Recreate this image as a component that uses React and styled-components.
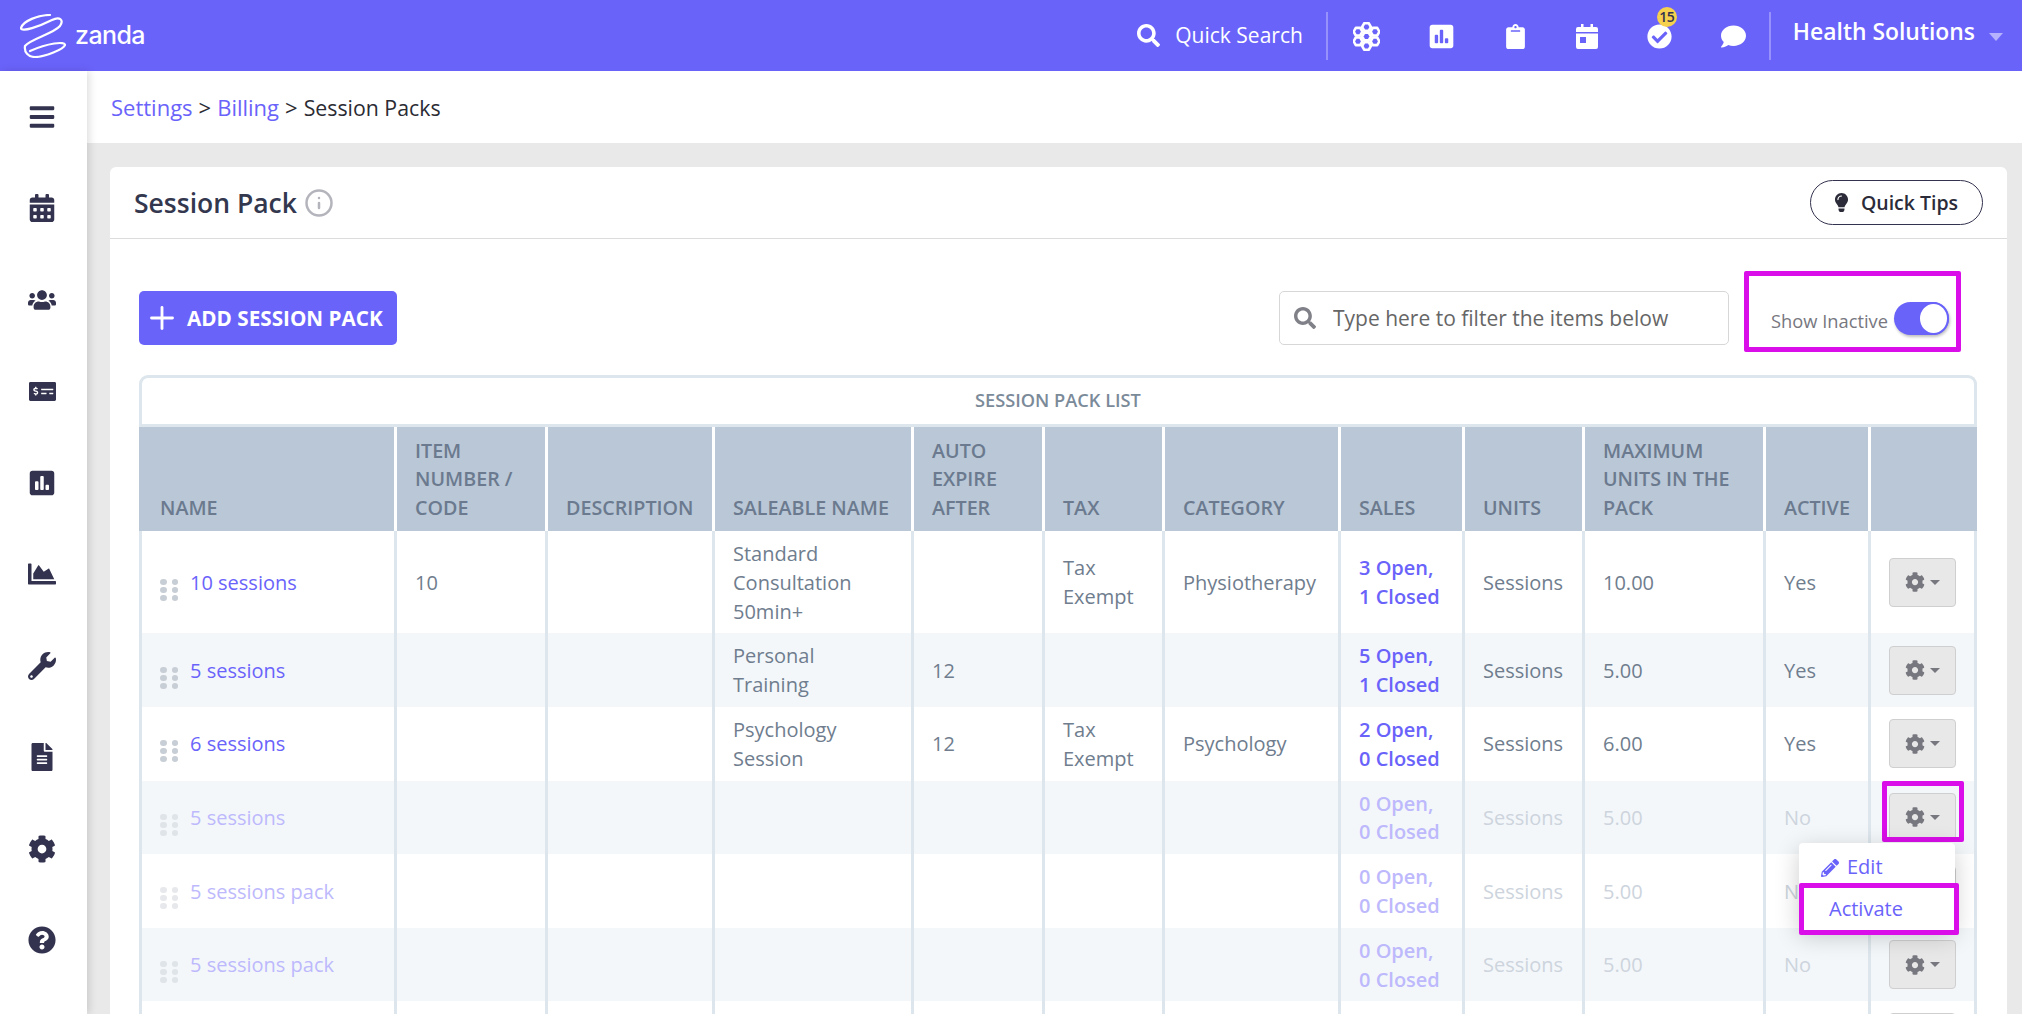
import React from "react";
import styled, { createGlobalStyle } from "styled-components";
import {
  FaBars,
  FaCalendarAlt,
  FaChartArea,
  FaCheckCircle,
  FaClipboard,
  FaCog,
  FaComment,
  FaFileAlt,
  FaLightbulb,
  FaMoneyCheckAlt,
  FaPencilAlt,
  FaPoll,
  FaQuestionCircle,
  FaSearch,
  FaUsers,
  FaWrench
} from "react-icons/fa";
import { Info, Plus } from "lucide-react";

const PURPLE = "#6a63fa";
const MAGENTA = "#d90ee8";
const LINE = "#dce6ec";

const GlobalStyle = createGlobalStyle`
  html, body {
    margin: 0;
    height: 100%;
    overflow: hidden;
    background: #e9e9e9;
    font-family: "Open Sans", "Noto Sans", sans-serif;
  }
  * { box-sizing: border-box; }
`;

const sideIcons = [
  { Icon: FaBars, size: 28 },
  { Icon: FaCalendarAlt, size: 28 },
  { Icon: FaUsers, size: 28 },
  { Icon: FaMoneyCheckAlt, size: 27 },
  { Icon: FaPoll, size: 28 },
  { Icon: FaChartArea, size: 28 },
  { Icon: FaWrench, size: 28 },
  { Icon: FaFileAlt, size: 28 },
  { Icon: FaCog, size: 28 },
  { Icon: FaQuestionCircle, size: 28 }
];

const columns = [255, 151, 167, 199, 131, 120, 176, 124, 120, 181, 105, 103];

const headings = [
  "NAME",
  "ITEM NUMBER / CODE",
  "DESCRIPTION",
  "SALEABLE NAME",
  "AUTO EXPIRE AFTER",
  "TAX",
  "CATEGORY",
  "SALES",
  "UNITS",
  "MAXIMUM UNITS IN THE PACK",
  "ACTIVE",
  ""
];

const rows = [
  {
    name: "10 sessions",
    code: "10",
    saleable: "Standard Consultation 50min+",
    tax: "Tax Exempt",
    category: "Physiotherapy",
    sales: ["3 Open,", "1 Closed"],
    units: "Sessions",
    max: "10.00",
    active: "Yes"
  },
  {
    name: "5 sessions",
    saleable: "Personal Training",
    expire: "12",
    sales: ["5 Open,", "1 Closed"],
    units: "Sessions",
    max: "5.00",
    active: "Yes"
  },
  {
    name: "6 sessions",
    saleable: "Psychology Session",
    expire: "12",
    tax: "Tax Exempt",
    category: "Psychology",
    sales: ["2 Open,", "0 Closed"],
    units: "Sessions",
    max: "6.00",
    active: "Yes"
  },
  {
    name: "5 sessions",
    sales: ["0 Open,", "0 Closed"],
    units: "Sessions",
    max: "5.00",
    active: "No",
    inactive: true,
    menu: true
  },
  {
    name: "5 sessions pack",
    sales: ["0 Open,", "0 Closed"],
    units: "Sessions",
    max: "5.00",
    active: "No",
    inactive: true
  },
  {
    name: "5 sessions pack",
    sales: ["0 Open,", "0 Closed"],
    units: "Sessions",
    max: "5.00",
    active: "No",
    inactive: true
  },
  // only the top of this row's button shows above the fold
  { blank: true }
];

const ZandaMark = () => (
  <svg width="46" height="44" viewBox="20 13 46 44" fill="none">
    <path
      d="M50 14C38 14 23 20 21 27C21 32 40 25 52 19C60 15 64 19 60 25C53 33 30 38 25 45C24 51 28 56 35 56C45 56 64 48 65 44C65 40 48 42 30 50"
      stroke="#fff"
      strokeWidth="2.2"
      strokeLinecap="round"
    />
  </svg>
);

const hexPoints = (cx, cy, r) =>
  [0, 1, 2, 3, 4, 5]
    .map(i => {
      const a = (Math.PI / 3) * i;
      return `${cx + r * Math.cos(a)},${cy + r * Math.sin(a)}`;
    })
    .join(" ");

const HiveIcon = () => (
  <svg width="27" height="29" viewBox="0 0 27 29" fill="none">
    {[
      [13.5, 14.5],
      [13.5, 5],
      [13.5, 24],
      [5, 9.7],
      [22, 9.7],
      [5, 19.3],
      [22, 19.3]
    ].map(([x, y]) => (
      <polygon
        key={`${x}-${y}`}
        points={hexPoints(x, y, 4.4)}
        stroke="#fff"
        strokeWidth="2.6"
        strokeLinejoin="round"
      />
    ))}
  </svg>
);

const CalendarIcon = () => (
  <svg width="22" height="25" viewBox="0 0 22 25">
    <path
      d="M5 0h2.5v3h7V0H17v3h3a2 2 0 0 1 2 2v3H0V5a2 2 0 0 1 2-2h3zM0 9.5h22V23a2 2 0 0 1-2 2H2a2 2 0 0 1-2-2zm4 3.5v6h6v-6z"
      fill="#fff"
    />
  </svg>
);

const DragDots = ({ $inactive }) => (
  <DragHandle $inactive={$inactive}>
    {[0, 1, 2, 3, 4, 5].map(i => (
      <i key={i} />
    ))}
  </DragHandle>
);

const ActionCell = ({ menu }) => (
  <ActionWrap>
    {menu && <ButtonMark />}
    <GearButton>
      <FaCog size={20} />
      <GearCaret />
    </GearButton>
    {menu && (
      <Dropdown>
        <MenuItem>
          <FaPencilAlt size={18} />
          Edit
        </MenuItem>
        <ActivateItem>Activate</ActivateItem>
      </Dropdown>
    )}
  </ActionWrap>
);

export default function App() {
  return (
    <Page>
      <GlobalStyle />
      <TopBar>
        <Logo>
          <ZandaMark />
          <LogoText>zanda</LogoText>
        </Logo>
        <QuickSearch>
          <FaSearch size={23} />
          Quick Search
        </QuickSearch>
        <NavDivider />
        <NavSlot $w={78}>
          <HiveIcon />
        </NavSlot>
        <NavSlot $w={71}>
          <FaPoll size={27} />
        </NavSlot>
        <NavSlot $w={77}>
          <FaClipboard size={25} />
        </NavSlot>
        <NavSlot $w={67}>
          <CalendarIcon />
        </NavSlot>
        <NavSlot $w={78}>
          <FaCheckCircle size={25} />
          <Badge>15</Badge>
        </NavSlot>
        <NavSlot $w={70}>
          <FaComment size={25} />
        </NavSlot>
        <NavDivider />
        <Account>Health Solutions</Account>
        <AccountCaret />
      </TopBar>
      <Body>
        <Sidebar>
          {sideIcons.map(({ Icon, size }, i) => (
            <SideSlot key={i}>
              <Icon size={size} />
            </SideSlot>
          ))}
        </Sidebar>
        <Main>
          <Breadcrumb>
            <Crumb>Settings</Crumb> &gt; <Crumb>Billing</Crumb> &gt;{" "}
            <CurrentCrumb>Session Packs</CurrentCrumb>
          </Breadcrumb>
          <Card>
            <CardHeader>
              <CardTitle>Session Pack</CardTitle>
              <InfoIcon size={30} strokeWidth={2} />
              <QuickTips>
                <FaLightbulb size={19} />
                Quick Tips
              </QuickTips>
            </CardHeader>
            <CardBody>
              <Toolbar>
                <AddButton>
                  <Plus size={36} strokeWidth={1.9} />
                  ADD SESSION PACK
                </AddButton>
                <FilterBox>
                  <FaSearch size={22} />
                  <FilterInput placeholder="Type here to filter the items below" />
                </FilterBox>
                <ToggleMark>
                  <ToggleLabel>Show Inactive</ToggleLabel>
                  <Toggle>
                    <Knob />
                  </Toggle>
                </ToggleMark>
              </Toolbar>
              <TablePanel>
                <TableTitle>SESSION PACK LIST</TableTitle>
                <Table>
                  <colgroup>
                    {columns.map((w, i) => (
                      <col key={i} style={{ width: w }} />
                    ))}
                  </colgroup>
                  <thead>
                    <tr>
                      {headings.map((h, i) => (
                        <Th key={i}>{h}</Th>
                      ))}
                    </tr>
                  </thead>
                  <tbody>
                    {rows.map((r, i) => (
                      <Row key={i} $striped={i % 2 === 1}>
                        <Td>
                          {r.name && (
                            <NameWrap>
                              <DragDots $inactive={r.inactive} />
                              <RowLink $inactive={r.inactive}>{r.name}</RowLink>
                            </NameWrap>
                          )}
                        </Td>
                        <Td $inactive={r.inactive}>{r.code}</Td>
                        <Td />
                        <Td $inactive={r.inactive}>{r.saleable}</Td>
                        <Td $inactive={r.inactive}>{r.expire}</Td>
                        <Td $inactive={r.inactive}>{r.tax}</Td>
                        <Td $inactive={r.inactive}>{r.category}</Td>
                        <Td>
                          {r.sales && (
                            <RowLink $inactive={r.inactive} $bold>
                              {r.sales[0]}
                              <br />
                              {r.sales[1]}
                            </RowLink>
                          )}
                        </Td>
                        <Td $inactive={r.inactive}>{r.units}</Td>
                        <Td $inactive={r.inactive}>{r.max}</Td>
                        <Td $inactive={r.inactive}>{r.active}</Td>
                        <ActionTd>
                          <ActionCell menu={r.menu} />
                        </ActionTd>
                      </Row>
                    ))}
                  </tbody>
                </Table>
              </TablePanel>
            </CardBody>
          </Card>
        </Main>
      </Body>
    </Page>
  );
}

const Page = styled.div`
  display: flex;
  flex-direction: column;
  height: 100vh;
  overflow: hidden;
`;

const TopBar = styled.header`
  display: flex;
  align-items: center;
  flex: 0 0 71px;
  padding: 0 19px 0 20px;
  background: ${PURPLE};
  color: #fff;
`;

const Logo = styled.div`
  display: flex;
  align-items: center;
  gap: 9px;
  margin-right: auto;
`;

const LogoText = styled.span`
  font-family: Inter, sans-serif;
  font-size: 25px;
  font-weight: 500;
  letter-spacing: -0.6px;
  line-height: 1;
`;

const QuickSearch = styled.div`
  display: flex;
  align-items: center;
  gap: 15px;
  margin: 0 23px 1px 0;
  font-size: 21px;
`;

const NavDivider = styled.div`
  width: 2px;
  height: 48px;
  background: rgba(255, 255, 255, 0.3);
`;

const NavSlot = styled.div`
  position: relative;
  display: flex;
  align-items: center;
  justify-content: center;
  width: ${p => p.$w}px;
  padding-top: 2px;
`;

const Badge = styled.span`
  position: absolute;
  top: -15px;
  left: 36px;
  width: 20px;
  height: 20px;
  border-radius: 50%;
  background: #f6d14e;
  color: #33334f;
  font-size: 14px;
  font-weight: 600;
  line-height: 20px;
  text-align: center;
  letter-spacing: -0.5px;
`;

const Account = styled.div`
  margin: -9px 14px 0 22px;
  font-size: 22.9px;
  font-weight: 600;
`;

const AccountCaret = styled.span`
  width: 0;
  height: 0;
  margin-top: 2px;
  border-left: 7px solid transparent;
  border-right: 7px solid transparent;
  border-top: 8px solid rgba(255, 255, 255, 0.5);
`;

const Body = styled.div`
  display: flex;
  flex: 1;
  min-height: 0;
`;

const Sidebar = styled.nav`
  position: relative;
  z-index: 2;
  flex: 0 0 87px;
  padding-right: 3px;
  background: #fff;
  box-shadow: 2px 0 8px rgba(0, 0, 0, 0.14);
  color: #33334f;
`;

const SideSlot = styled.div`
  display: flex;
  align-items: center;
  justify-content: center;
  height: 91.5px;
`;

const Main = styled.main`
  flex: 1;
  min-width: 0;
  background: #e9e9e9;
`;

const Breadcrumb = styled.div`
  display: flex;
  align-items: center;
  gap: 6px;
  height: 72px;
  padding-left: 24px;
  background: #fff;
  color: #2b2b33;
  font-size: 22px;
`;

const Crumb = styled.span`
  color: ${PURPLE};
`;

const CurrentCrumb = styled.span`
  font-size: 21.3px;
`;

const Card = styled.section`
  margin: 24px 15px 0 23px;
  border-radius: 6px 6px 0 0;
  background: #fff;
`;

const CardHeader = styled.div`
  display: flex;
  align-items: center;
  height: 72px;
  padding: 0 24px 0 24px;
  border-bottom: 1px solid #dcdcdc;
`;

const CardTitle = styled.h1`
  margin: 0 7px 0 0;
  color: #33384f;
  font-size: 26.5px;
  font-weight: 600;
`;

const InfoIcon = styled(Info)`
  color: #b4b4bc;
`;

const QuickTips = styled.button`
  display: flex;
  align-items: center;
  justify-content: center;
  gap: 10px;
  width: 173px;
  height: 45px;
  margin-left: auto;
  padding: 0 3px 0 0;
  border: 1px solid #33334f;
  border-radius: 23px;
  background: #fff;
  color: #2b2b3a;
  font-family: inherit;
  font-size: 19.5px;
  font-weight: 600;
`;

const CardBody = styled.div`
  padding: 52px 30px 0 29px;
`;

const Toolbar = styled.div`
  display: flex;
  align-items: center;
  height: 54px;
  margin-bottom: 30px;
`;

const AddButton = styled.button`
  display: flex;
  align-items: center;
  gap: 7px;
  width: 258px;
  height: 54px;
  margin-right: auto;
  padding: 0 0 0 5px;
  border: 0;
  border-radius: 5px;
  background: ${PURPLE};
  color: #fff;
  font-family: inherit;
  font-size: 20.7px;
  font-weight: 700;
  white-space: nowrap;
`;

const FilterBox = styled.label`
  display: flex;
  align-items: center;
  gap: 15px;
  width: 450px;
  height: 54px;
  margin-right: 15px;
  padding-left: 14px;
  border: 1px solid #d7d7d7;
  border-radius: 5px;
  color: #808088;
`;

const FilterInput = styled.input`
  flex: 1;
  min-width: 0;
  border: 0;
  outline: 0;
  background: transparent;
  font-family: inherit;
  font-size: 21px;
  &::placeholder {
    color: #666;
    opacity: 1;
  }
`;

const ToggleMark = styled.div`
  display: flex;
  align-items: flex-end;
  justify-content: flex-end;
  gap: 6px;
  flex: 0 0 217px;
  height: 81px;
  margin: -13px 16px 0 0;
  padding: 0 7px 12px 0;
  border: 5px solid ${MAGENTA};
  border-radius: 2px;
`;

const ToggleLabel = styled.span`
  margin-bottom: 2px;
  color: #77777f;
  font-size: 18.3px;
`;

const Toggle = styled.span`
  display: flex;
  justify-content: flex-end;
  width: 55px;
  height: 33px;
  border-radius: 17px;
  background: ${PURPLE};
  box-shadow: 1px 2px 3px rgba(0, 0, 0, 0.25);
`;

const Knob = styled.span`
  width: 31px;
  height: 33px;
  border: 2px solid ${PURPLE};
  border-radius: 50%;
  background: #fff;
`;

const TablePanel = styled.div`
  border: 3px solid ${LINE};
  border-bottom: 0;
  border-radius: 9px 9px 0 0;
`;

const TableTitle = styled.div`
  height: 49px;
  padding-top: 10px;
  border-bottom: 3px solid ${LINE};
  color: #7b8a99;
  font-size: 18.2px;
  font-weight: 600;
  text-align: center;
`;

const Table = styled.table`
  width: 1832px;
  border-collapse: separate;
  border-spacing: 0;
  table-layout: fixed;
  font-size: 20px;
  line-height: 28.8px;
`;

const Th = styled.th`
  height: 104px;
  padding: 8px 12px 8px 18px;
  border-right: 3px solid #fff;
  background: #b9c7d7;
  color: #6b7a8e;
  font-size: 19.7px;
  font-weight: 600;
  text-align: left;
  vertical-align: bottom;
  &:first-child {
    box-shadow: -3px 0 0 #b9c7d7;
  }
  &:last-child {
    border-right: 0;
    box-shadow: 3px 0 0 #b9c7d7;
  }
`;

const Row = styled.tr`
  background: ${p => (p.$striped ? "#f3f7fa" : "#fff")};
`;

const Td = styled.td`
  padding: 9px 18px 7px 18px;
  border-right: 3px solid ${LINE};
  color: ${p => (p.$inactive ? "#cdd4dd" : "#6f7d8e")};
  vertical-align: middle;
`;

const ActionTd = styled.td`
  padding: 12px 0;
  vertical-align: middle;
`;

const NameWrap = styled.div`
  display: flex;
  align-items: center;
  gap: 12px;
  white-space: nowrap;
`;

const DragHandle = styled.span`
  display: grid;
  grid-template-columns: 6.5px 6.5px;
  grid-auto-rows: 6px;
  gap: 2px 5px;
  margin-top: 13px;
  opacity: ${p => (p.$inactive ? 0.45 : 1)};
  i {
    border-radius: 50%;
    background: #c8ced6;
  }
`;

const RowLink = styled.a`
  color: ${p => (p.$inactive ? "#bdb9fc" : PURPLE)};
  font-weight: ${p => (p.$bold ? 600 : 500)};
`;

const ActionWrap = styled.div`
  position: relative;
  width: 67px;
  height: 49px;
  margin-left: 18px;
`;

const GearButton = styled.button`
  display: flex;
  align-items: center;
  justify-content: center;
  gap: 5px;
  width: 67px;
  height: 49px;
  padding: 0;
  border: 1px solid #cfcfcf;
  border-radius: 4px;
  background: #e8e8e8;
  color: #77777f;
`;

const GearCaret = styled.span`
  width: 0;
  height: 0;
  border-left: 5px solid transparent;
  border-right: 5px solid transparent;
  border-top: 5px solid #77777f;
`;

const ButtonMark = styled.span`
  position: absolute;
  z-index: 2;
  top: -12px;
  left: -7px;
  width: 82px;
  height: 61px;
  border: 5px solid ${MAGENTA};
  border-radius: 2px;
  pointer-events: none;
`;

const Dropdown = styled.div`
  position: absolute;
  z-index: 3;
  top: 50px;
  right: 1px;
  width: 156px;
  padding-top: 10px;
  border-radius: 4px;
  background: #fff;
  box-shadow: 0 6px 24px rgba(0, 0, 0, 0.2);
`;

const MenuItem = styled.a`
  display: flex;
  align-items: center;
  gap: 8px;
  height: 30px;
  padding-left: 22px;
  color: ${PURPLE};
  font-weight: 500;
`;

const ActivateItem = styled.a`
  display: flex;
  align-items: center;
  position: relative;
  width: 160px;
  height: 52px;
  margin-bottom: -5px;
  padding: 1px 0 0 25px;
  border: 5px solid ${MAGENTA};
  border-radius: 2px;
  background: #fff;
  color: ${PURPLE};
  font-weight: 500;
`;
